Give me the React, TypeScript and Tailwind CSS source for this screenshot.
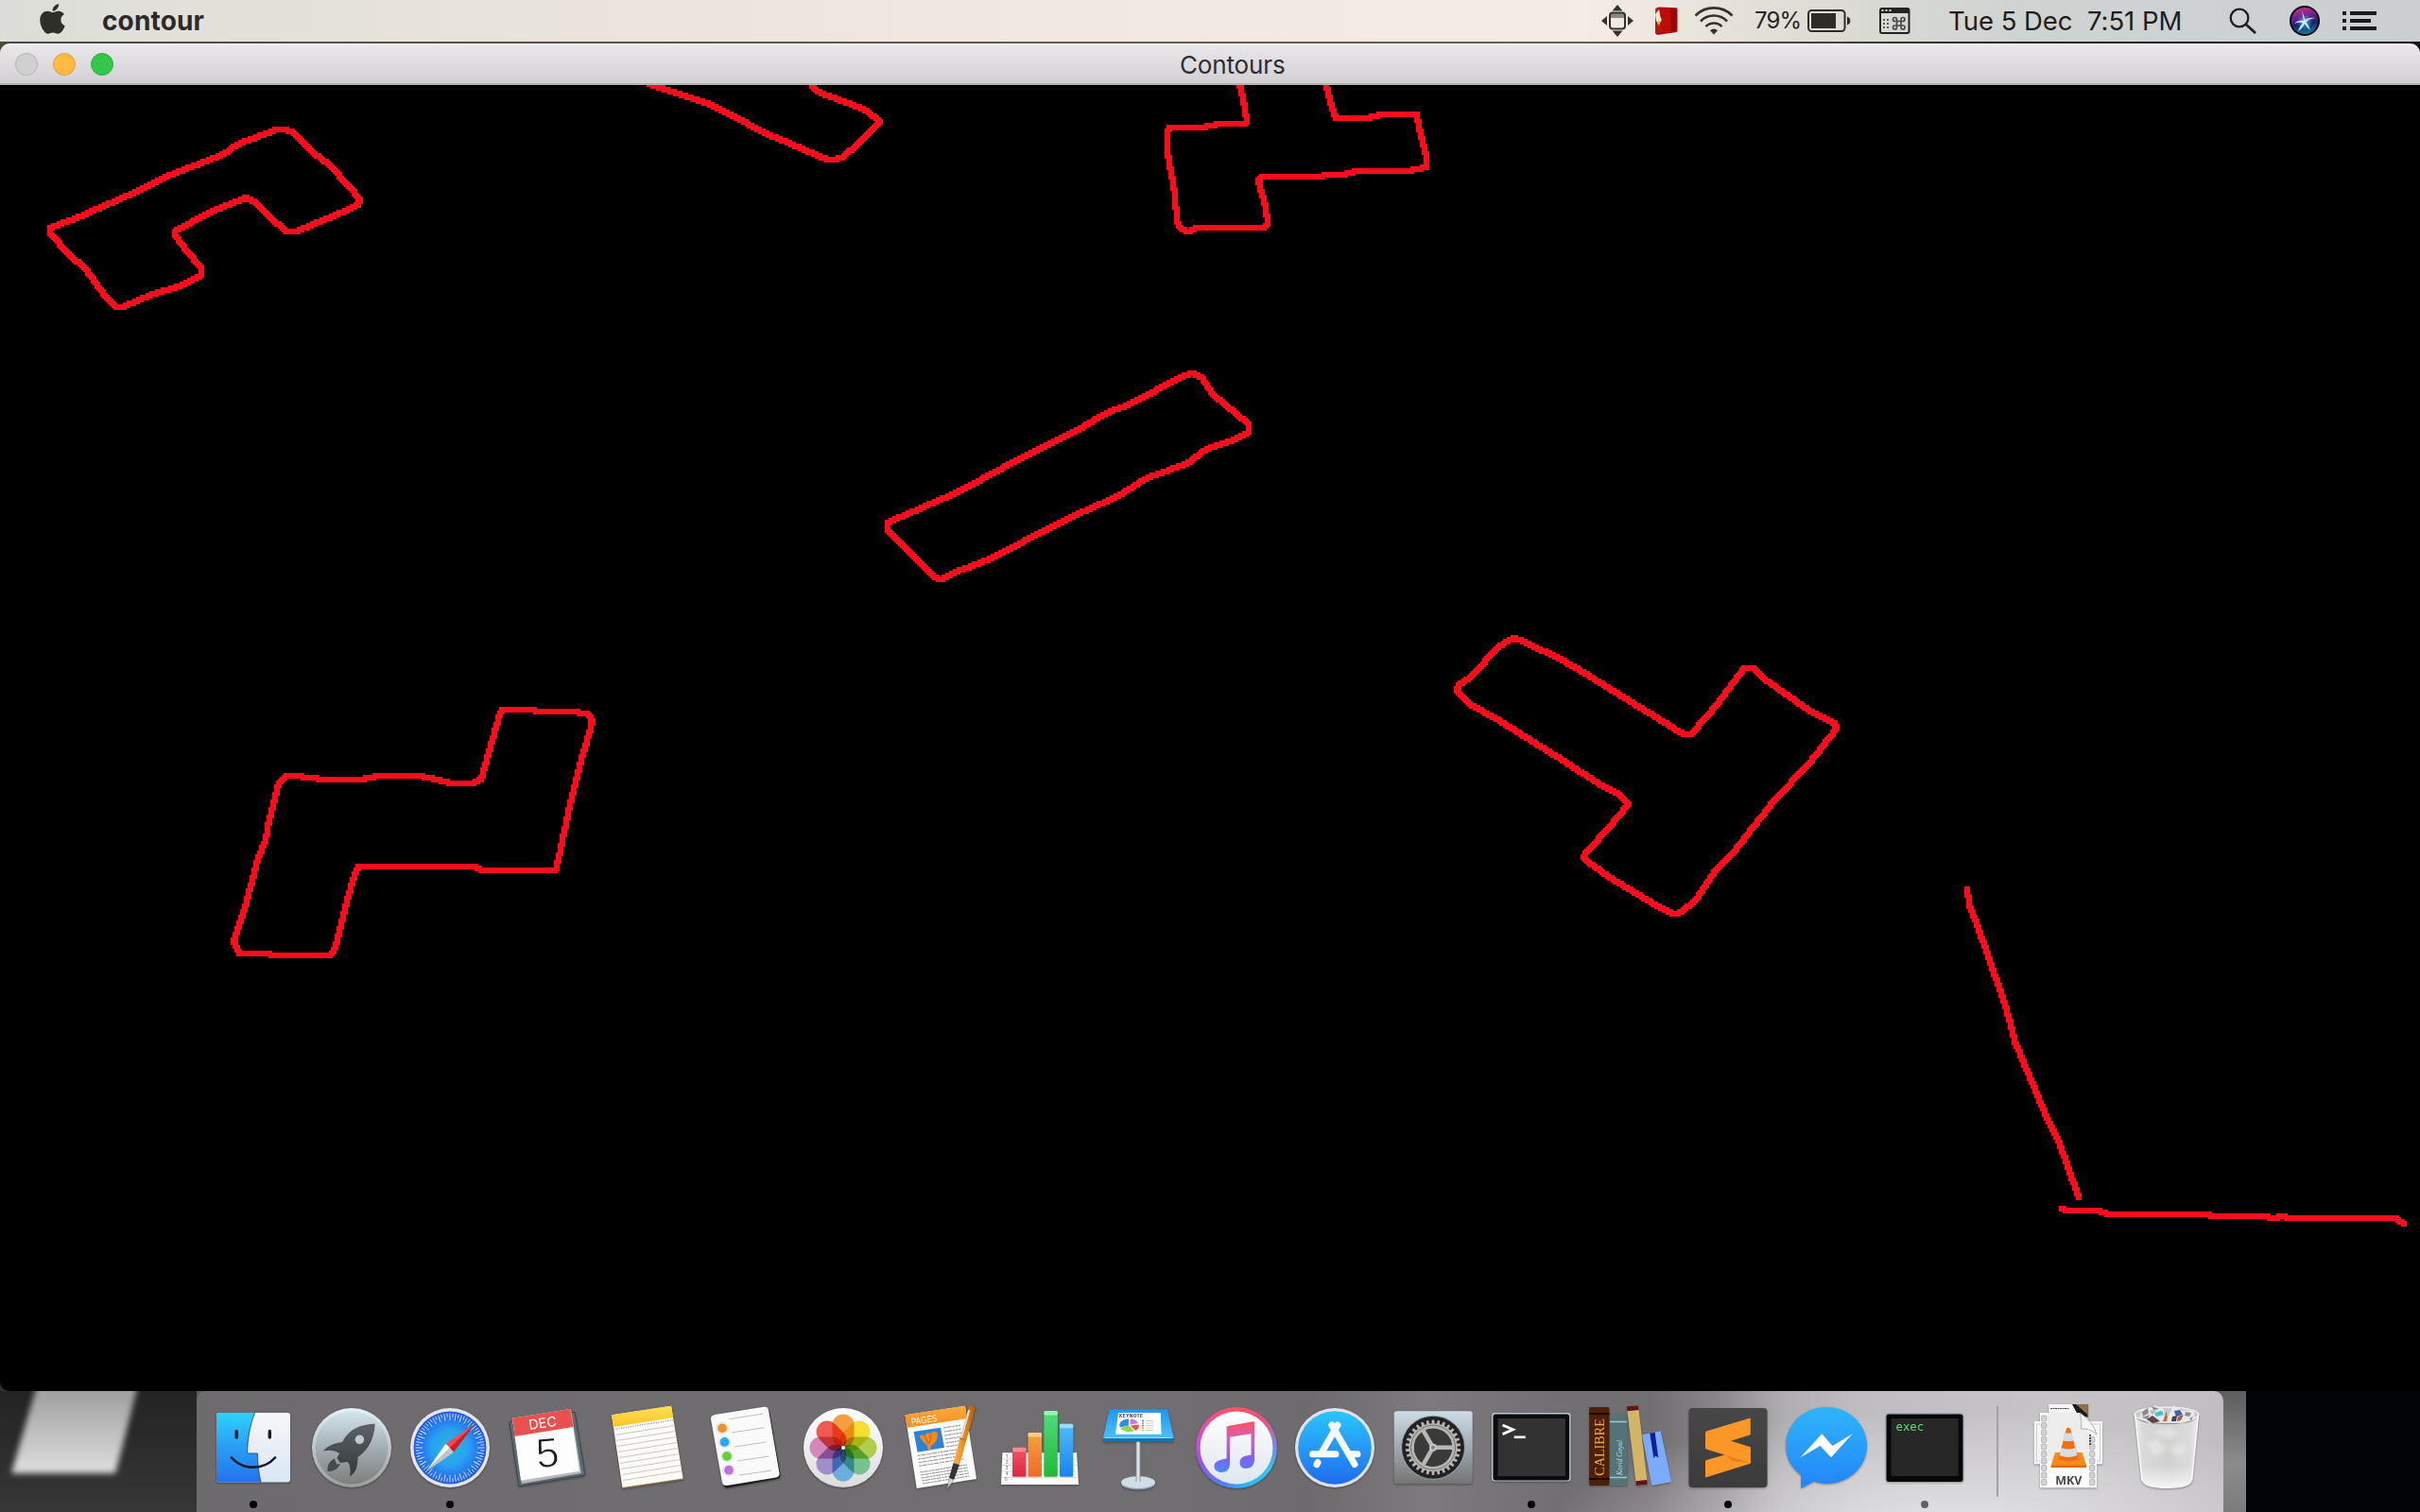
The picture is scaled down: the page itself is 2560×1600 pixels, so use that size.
import type { ReactNode } from "react";
import { FaApple } from "react-icons/fa";

const RED = "#fc0d1b";

const contours: { closed: boolean; points: string }[] = [
  {
    closed: true,
    points:
      "300,136 308,138 333,162 347,173 369,197 381.5,211 379,216 347,231 312,245 302,245 284,228 269,212 261,209 220,225 184,244 184,249 196,265 212,282 212,290 188,302 163,310 129,325 122,325 110,313 100,298 90,285 71,267 52,247 53,240 84,228 135,206 171,188 237,163 251,153 292,137",
  },
  {
    closed: false,
    points:
      "680,84 692,90 746,109 781,124 804,138 829,149 870,167 879,169.5 890,166.5 910,148 930,129.5 926,124 913,115.5 864,96 858,90 856,84",
  },
  {
    closed: false,
    points:
      "1310,80 1311,89 1314.5,104 1318.5,126.5 1317,131 1291.5,131 1271.5,134 1237,135.5 1234.7,139.5 1235.3,160 1242.8,204 1245.6,234 1248.5,241 1256,245 1266,241 1337.5,241 1341,236 1338.6,219 1331.7,191 1334.6,187 1377.7,187 1420.7,184 1435,181 1489.6,181 1508.5,177 1508.5,167 1501,134 1498.8,121 1461,120.7 1446.5,125 1412.7,125 1406.4,106 1402,89 1400,82",
  },
  {
    closed: true,
    points:
      "1261.7,395 1270,399.6 1283,417 1320,448.5 1320,456.6 1306,465 1277,475 1254,490 1214,504 1179.6,526 1133.7,546.5 1082,572.4 1042,592.7 1007.4,607.5 994,612 987,608 964,587 939.7,560 939.7,552.8 1013,520.6 1087.8,480 1133.7,459.6 1171,437 1196.8,427 1248.5,398.5",
  },
  {
    closed: true,
    points:
      "530,751 563,751 570,753 602,753 621.7,754.5 626,762 613,810 605,843 588,917 587,921 510,921 502,917 379,917 375,927 367,953 354,1002 348,1010.7 288,1010.7 283,1008.7 252,1008.7 247,997 258,960 272,908 280,888 285,867 295,828 303,821 313,821 343,824.7 380,824.7 400,821 442,821 462,824 478,829 498,829 508,824 528,755",
  },
  {
    closed: true,
    points:
      "1601.7,675.7 1608,676.7 1618,682.7 1643,693 1670,708 1780,776 1788,776.7 1816.7,745 1845,707.7 1855,707.7 1866.7,719 1913,750 1941.7,765 1942.7,770.7 1913,808 1876.7,846.7 1833,903 1815,921.7 1795,950 1778,965.7 1770,966.7 1756.7,961.7 1706.7,931.7 1680,913 1675.7,906.7 1678,900 1700,876.7 1723,850 1710,839 1696.7,833 1650,803 1586.7,763 1555,744 1541.7,731.7 1542,725.7 1555,716 1585,685 1596.7,676",
  },
  {
    closed: false,
    points:
      "2081,941.7 2083,956.7 2091.7,976.7 2105,1016.7 2118,1056.7 2126.7,1083 2130,1100 2140,1125 2163,1176.7 2178,1210 2198,1266.7",
  },
  {
    closed: false,
    points:
      "2180,1279 2188,1281 2218,1281 2231.7,1284.7 2281.7,1285 2396.7,1287 2403,1289 2415,1287 2421.7,1289 2535,1289 2542,1295.7",
  },
];

/* The canvas is drawn at half resolution: each line is stepped cell by cell with a 3 × 3 brush. */
const CELL = 2;

function rasterise(points: string, closed: boolean): string {
  const cells = points.split(" ").map((p) => p.split(",").map((n) => Math.floor(Number(n) / CELL)));
  if (closed) cells.push(cells[0]);
  const parts: string[] = [];
  for (let i = 0; i < cells.length - 1; i++) {
    const [x0, y0] = cells[i];
    const [x1, y1] = cells[i + 1];
    const steps = Math.max(Math.abs(x1 - x0), Math.abs(y1 - y0), 1);
    for (let s = 0; s <= steps; s++) {
      const x = Math.round(x0 + ((x1 - x0) * s) / steps);
      const y = Math.round(y0 + ((y1 - y0) * s) / steps);
      parts.push(`M${(x - 1) * CELL} ${(y - 1) * CELL}h6v6h-6z`);
    }
  }
  return parts.join("");
}

function ContourCanvas() {
  return (
    <svg viewBox="0 90 2560 1382" className="block h-[1382px] w-[2560px]" shapeRendering="crispEdges">
      {contours.map((c, i) => (
        <path key={i} d={rasterise(c.points, c.closed)} fill={RED} />
      ))}
    </svg>
  );
}

/* ---------- menu bar ---------- */

function DisplayIcon() {
  return (
    <svg viewBox="0 0 34 34" className="h-[34px] w-[34px]">
      <path d="M17 0l5.500 6.500h-11zM17 34l5.500-6.500h-11zM0 17l6-5v10zM34 17l-6-5v10z" fill="#34322e" />
      <path d="M9 9h16v5H9z" fill="#8b8783" />
      <rect x="9" y="8.500" width="16" height="17" rx="3" fill="none" stroke="#34322e" strokeWidth="2" />
    </svg>
  );
}

function RedBookIcon() {
  return (
    <svg viewBox="0 0 25 30" className="h-[30px] w-[25px]">
      <path d="M1.500 2l3-1.500 19 .7 1 .8v24l-1 1L3 30l-2-2z" fill="#a60a0a" />
      <path d="M6 2h17v25H8z" fill="#bd0c0c" />
      <path d="M17 2h6v25h-5z" fill="#a00505" />
      <path d="M1.500 2l4.500 0 2 25-4 2-3-1z" fill="#c01010" />
      <path d="M1 8l4-5 1.500 8 1.500 3-2 3-1 3-3-5z" fill="#f1e6d2" />
      <path d="M3.500 15l3 1-2.500 4z" fill="#cfae2e" />
    </svg>
  );
}

function WifiIcon() {
  return (
    <svg viewBox="0 0 42 30" className="h-[30px] w-[42px]">
      <g fill="none" stroke="#34322e" strokeWidth="2.600">
        <path d="M1.500 9.500a27.500 27.500 0 0 1 39 0" />
        <path d="M7 15.500a19.500 19.500 0 0 1 28 0" />
        <path d="M12.500 21a12 12 0 0 1 17 0" />
      </g>
      <path d="M21 29.500l-4-4.200a5.600 5.600 0 0 1 8 0z" fill="#34322e" />
    </svg>
  );
}

function BatteryIcon() {
  return (
    <svg viewBox="0 0 46 24" className="h-[24px] w-[46px]">
      <rect x="1" y="1" width="38.500" height="22" rx="3.500" fill="none" stroke="#2e2c28" strokeWidth="2" />
      <rect x="4" y="4" width="26" height="16" fill="#2e2c28" />
      <path d="M42 7.500c4.500 1.500 4.500 7.500 0 9z" fill="#2e2c28" />
    </svg>
  );
}

function ShortcutIcon() {
  return (
    <svg viewBox="0 0 33 28" className="h-[28px] w-[33px]">
      <rect x="1" y="1" width="30.500" height="26" rx="2" fill="none" stroke="#24231f" strokeWidth="2" />
      <path d="M1 1h30v5H1z" fill="#24231f" />
      <g fill="#d9dad5">
        <rect x="2.500" y="2" width="2" height="2" />
        <rect x="6.500" y="2" width="2" height="2" />
        <rect x="10.500" y="2" width="2" height="2" />
      </g>
      <g fill="#5b5a56">
        <rect x="4" y="12" width="2" height="2" />
        <rect x="8" y="12" width="2" height="2" />
        <rect x="4" y="16" width="2" height="2" />
        <rect x="8" y="16" width="2" height="2" />
        <rect x="4" y="20" width="2" height="2" />
        <rect x="8" y="20" width="2" height="2" />
      </g>
      <path
        d="M18.500 14.500h4.500v4.500h-4.500zM18.500 14.500h-2a2 2 0 1 1 2-2zM23 14.500h2a2 2 0 1 0-2-2zM18.500 19h-2a2 2 0 1 0 2 2zM23 19h2a2 2 0 1 1-2 2z"
        fill="none"
        stroke="#4a4945"
        strokeWidth="1.700"
      />
    </svg>
  );
}

function SearchIcon() {
  return (
    <svg viewBox="0 0 30 28" className="h-[28px] w-[30px]">
      <circle cx="11" cy="11" r="9.300" fill="none" stroke="#1d1f1f" strokeWidth="2.300" />
      <path d="M17.500 17.500l10.500 9.500" stroke="#1d1f1f" strokeWidth="2.800" />
    </svg>
  );
}

function SiriIcon() {
  return (
    <svg viewBox="0 0 32 32" className="h-8 w-8">
      <defs>
        <linearGradient id="siri" x1="0.300" y1="0" x2="0.500" y2="1">
          <stop offset="0" stopColor="#c9307f" />
          <stop offset=".35" stopColor="#6a2390" />
          <stop offset=".65" stopColor="#16246f" />
          <stop offset="1" stopColor="#0e7f98" />
        </linearGradient>
        <radialGradient id="siriGlow">
          <stop offset="0" stopColor="#fff" stopOpacity=".9" />
          <stop offset=".35" stopColor="#7be0f0" stopOpacity=".5" />
          <stop offset="1" stopColor="#2b7be0" stopOpacity="0" />
        </radialGradient>
      </defs>
      <circle cx="16" cy="16" r="16" fill="#0a0a14" />
      <circle cx="16" cy="16" r="14" fill="url(#siri)" />
      <circle cx="16" cy="17" r="9" fill="url(#siriGlow)" />
      <path
        d="M13 6q3 5 3 9 5-3 11-2-6 1-10 4 4 4 5 9-4-3-6-7-2 5-7 8 2-6 5-9-5-1-9 1 4-4 10-3-1-5-2-10z"
        fill="#d9f6fa"
        opacity=".85"
      />
    </svg>
  );
}

function ListIcon() {
  return (
    <svg viewBox="0 0 36 20" className="h-[20px] w-[36px]">
      <g fill="#1a1c1c">
        <rect x="0" y="0" width="4" height="4" />
        <rect x="8" y="0" width="28" height="4" />
        <rect x="0" y="8" width="4" height="4" />
        <rect x="8" y="8" width="22" height="4" />
        <rect x="0" y="16" width="4" height="4" />
        <rect x="8" y="16" width="28" height="4" />
      </g>
    </svg>
  );
}

function MenuBar() {
  return (
    <header className="flex h-[44px] w-full items-center bg-[linear-gradient(90deg,#dcddd8_0px,#e3e1da_260px,#ebe4de_640px,#f1e9e1_1150px,#f4ece5_1680px,#dfddd5_1900px,#cfd3d2_2140px,#cbcfd0_2560px)] font-[Inter,sans-serif] text-[#262521]">
      <FaApple className="ml-[42px] h-[36px] w-[27px] -translate-y-[2px] text-[#302e29]" />
      <span className="ml-[39px] w-[120px] text-[28px] font-bold leading-[44px] tracking-[0.15px] whitespace-nowrap text-[#2c2a26]">
        contour
      </span>
      <div className="ml-[1466px] flex h-full items-center">
        <DisplayIcon />
        <div className="ml-[22px]"><RedBookIcon /></div>
        <div className="ml-[17px]"><WifiIcon /></div>
        <span className="ml-[22px] w-[56px] text-[24px] leading-[44px] tracking-[-0.900px] whitespace-nowrap">79%</span>
        <BatteryIcon />
        <div className="ml-[30px]"><ShortcutIcon /></div>
        <span className="ml-[40px] w-[257px] text-[27.500px] leading-[44px] tracking-[-0.030px] whitespace-pre text-[#1d1e1c]">
          {"Tue 5 Dec  7:51 PM"}
        </span>
        <div className="ml-[40px]"><SearchIcon /></div>
        <div className="ml-[34px]"><SiriIcon /></div>
        <div className="ml-[24px]"><ListIcon /></div>
      </div>
    </header>
  );
}

/* ---------- dock icons, each on a 104 × 104 field ---------- */

function Icon({ children }: { children: ReactNode }) {
  return (
    <svg viewBox="0 0 104 104" className="h-[104px] w-[104px] overflow-visible drop-shadow-[0_1px_1px_rgba(0,0,0,0.35)]">
      {children}
    </svg>
  );
}

function Grad({ id, stops, x2 = "0", y2 = "1" }: { id: string; stops: [number, string][]; x2?: string; y2?: string }) {
  return (
    <linearGradient id={id} x1="0" y1="0" x2={x2} y2={y2}>
      {stops.map(([o, c]) => (
        <stop key={o} offset={o} stopColor={c} />
      ))}
    </linearGradient>
  );
}

function Finder() {
  return (
    <Icon>
      <defs>
        <Grad id="fL" stops={[[0, "#2cd2fa"], [0.5, "#2a9df5"], [1, "#2472ee"]]} />
        <Grad id="fR" stops={[[0, "#f7f7f8"], [1, "#d9e6f4"]]} />
      </defs>
      <rect x="13" y="15" width="78" height="73.500" rx="3" fill="url(#fR)" />
      <path d="M16 15H53.500C48 29 46 43 45.600 57Q45.600 58 46.600 58H56.500C56.500 68 57.500 79 60 88.500H16a3 3 0 0 1-3-3V18a3 3 0 0 1 3-3z" fill="url(#fL)" />
      <path d="M53.500 15C48 29 46 43 45.600 57Q45.600 58 46.600 58H56.500C56.500 68 57.500 79 60 88.500" fill="none" stroke="#1c3c66" strokeWidth=".8" />
      <path d="M34.200 34.500v6.500M69.300 34.500v6.500" stroke="#151b26" strokeWidth="3.400" strokeLinecap="round" />
      <path d="M29 62.500C41 76 63 76 75 62.500" fill="none" stroke="#151b26" strokeWidth="2.600" strokeLinecap="round" />
    </Icon>
  );
}

function Launchpad() {
  return (
    <Icon>
      <defs>
        <Grad id="lp" stops={[[0, "#d3e5ec"], [0.5, "#a3afb3"], [1, "#7e7d7c"]]} />
        <Grad id="lpr" stops={[[0, "#e4f2f6"], [1, "#9a9c9c"]]} />
        <Grad id="rk" stops={[[0, "#5c6265"], [1, "#33383b"]]} />
      </defs>
      <circle cx="52" cy="52" r="42" fill="url(#lpr)" />
      <circle cx="52" cy="52" r="38.500" fill="url(#lp)" />
      <path d="M76.700 26.700C62 27 49 32 42 46C35 47 27 49 22 55.500C28 54 34 54.500 39 58L36.500 63L40 68L48 67C51 72 51 77 50 82C56 79 58.500 73 58.500 62C70 54 76 42 76.700 26.700z" fill="url(#rk)" />
      <path d="M34 63.500C27 67 26.500 71 26.500 77C32 77 37 75.500 40 69L36 69.500z" fill="#454b4e" />
      <circle cx="60.400" cy="43.300" r="4.800" fill="#bcc9ce" />
    </Icon>
  );
}

function Safari() {
  return (
    <Icon>
      <defs>
        <radialGradient id="sf">
          <stop offset="0" stopColor="#27b9e0" />
          <stop offset=".5" stopColor="#2aa0f0" />
          <stop offset="1" stopColor="#2058ee" />
        </radialGradient>
      </defs>
      <circle cx="52" cy="52" r="42" fill="#e6e6ea" />
      <circle cx="52" cy="52" r="38.500" fill="url(#sf)" />
      {Array.from({ length: 72 }, (_, i) => (
        <path key={i} d={i % 2 ? "M52 15.500v4" : "M52 15.500v7.500"} stroke="#fff" strokeWidth=".9" opacity=".85" transform={`rotate(${i * 5} 52 52)`} />
      ))}
      <path d="M78 27L47.400 47.700L51.700 52z" fill="#fb4a4d" />
      <path d="M78 27L56 56.700L51.700 52z" fill="#d01c24" />
      <path d="M27 77L47.400 47.700L51.700 52z" fill="#fafafa" />
      <path d="M27 77L56 56.700L51.700 52z" fill="#c4c4c6" />
    </Icon>
  );
}

function Calendar() {
  return (
    <Icon>
      <path d="M11 25L80 14L91 81L21 92.700z" fill="#5d6b72" stroke="#3c474d" strokeWidth="1" />
      <path d="M14 22L76 12L87 79L24 90z" fill="#b9b9b6" />
      <path d="M14 20.700L75.300 11L85 76.700L23 86.700z" fill="#fdfdfd" />
      <path d="M14 20.700L75.300 11L78.500 30L16.500 40z" fill="#e8514f" />
      <text x="46" y="31" transform="rotate(-8 46 26)" textAnchor="middle" fontFamily="Inter" fontSize="14.500" fill="#fff">DEC</text>
      <text x="51" y="72.500" transform="rotate(-5 52 57)" textAnchor="middle" fontFamily="Liberation Sans" fontSize="44" fill="#1c1c1c" stroke="#fdfdfd" strokeWidth=".9">5</text>
    </Icon>
  );
}

function Notes() {
  return (
    <Icon>
      <defs>
        <Grad id="nt" stops={[[0, "#fddf52"], [1, "#f9c627"]]} />
      </defs>
      <path d="M15 18.500L78.500 9L91 85.500L27 95.200z" fill="#8d7a3a" />
      <path d="M15 17.300L78 7.700L90.500 84.500L26.400 94z" fill="#fcfbf7" />
      <path d="M15 17.300L78 7.700L80 20L17 30z" fill="url(#nt)" />
      <path d="M17.500 32.500L80.500 22.500" stroke="#777" strokeWidth="1" strokeDasharray="1 1.500" />
      {Array.from({ length: 9 }, (_, i) => (
        <path key={i} d={`M${19 + i} ${38.5 + i * 6}L${81.500 + i} ${28.500 + i * 6}`} stroke="#c9c7c1" strokeWidth="1" />
      ))}
    </Icon>
  );
}

function Reminders() {
  const rows: [number, number, string][] = [
    [28, 31.3, "#fb8f26"],
    [30.5, 46, "#2aa9f4"],
    [33, 61, "#5fd13b"],
    [35, 75.7, "#c06fe0"],
  ];
  return (
    <Icon>
      <path d="M20 19L73 11Q77 10 78 14L89.500 80Q90 84 86 85L34 94.500Q30 95 29 91L16.500 23Q16 20 20 19z" fill="#1d1e20" />
      <path d="M20 17L72 8.800Q76 8 77 12L88.500 79Q89 82.500 85 83.500L33 92Q29 92.500 28 89L16 22Q15.700 18 20 17z" fill="#fafafa" />
      <path d="M35.500 21.700L71.300 16M38 36L72.600 30.700M40.700 51L74.600 46M43.600 66L77.500 61M46 81L80.300 76" stroke="#b9b9b9" strokeWidth=".9" />
      {rows.map(([x, y, c]) => (
        <g key={c}>
          <circle cx={x} cy={y} r="6" fill="#fff" stroke="#d5d5d5" strokeWidth=".8" />
          <circle cx={x} cy={y} r="4.900" fill={c} />
        </g>
      ))}
    </Icon>
  );
}

function Photos() {
  const petals = ["#f6962f", "#f5dd22", "#a9cc3e", "#6cc08a", "#63a9e0", "#9a86c6", "#cf7fb4", "#ee4e40"];
  return (
    <Icon>
      <defs>
        <Grad id="ph" stops={[[0, "#ffffff"], [1, "#dcdcdc"]]} />
      </defs>
      <circle cx="52" cy="52" r="42" fill="url(#ph)" />
      <g className="isolate">
        {petals.map((c, i) => (
          <rect key={c} x="40.500" y="16.500" width="23" height="35.500" rx="11.500" fill={c} opacity=".92" className="mix-blend-multiply" transform={`rotate(${i * 45} 52 52)`} />
        ))}
      </g>
      <circle cx="52" cy="52" r="2" fill="#fff" />
    </Icon>
  );
}

function Pages() {
  return (
    <Icon>
      <defs>
        <Grad id="pg" stops={[[0, "#fdab3d"], [1, "#f58b20"]]} />
        <Grad id="pn" x2="1" y2="0" stops={[[0, "#f7b24a"], [0.5, "#ef8a18"], [1, "#a85c0c"]]} />
      </defs>
      <path d="M13.500 17.300L76.800 7.700L89 85L25.800 95z" fill="#fdfdfd" />
      <path d="M13.500 17.300L76.800 7.700L79 21L15.600 30.700z" fill="url(#pg)" />
      <text x="33.500" y="26" transform="rotate(-8.500 33.500 22)" textAnchor="middle" fontFamily="Liberation Sans" fontSize="10" fill="#fff" textLength="27.500" lengthAdjust="spacingAndGlyphs">PAGES</text>
      <path d="M22.500 35L51 30.700L55 51.700L26.600 56.700z" fill="#2b83d8" />
      <path d="M38 55L36.500 49Q31 46 28.500 39Q32 38 34 39Q37 35 40 37Q44 33 47.500 36Q49 43 44 48L40.500 50L40.500 54.500z" fill="#f28a1d" />
      <path d="M34 39Q36 44 38 48M41 38Q40 43 39 48" stroke="#c95f0c" strokeWidth="1" fill="none" />
      <g stroke="#8d8d8d" strokeWidth="1" strokeDasharray="3 .7 5 .8 2 .6">
        {Array.from({ length: 6 }, (_, i) => (
          <path key={i} d={`M${54 + i * 0.6} ${31 + i * 4}L${72 + i * 0.6} ${28.200 + i * 4}`} />
        ))}
        {Array.from({ length: 4 }, (_, i) => (
          <path key={i} d={`M${26.500 + i * 0.6} ${60.500 + i * 3.600}L${74 + i * 0.6} ${53 + i * 3.600}`} />
        ))}
        {Array.from({ length: 5 }, (_, i) => (
          <path key={i} d={`M${29.500 + i * 0.6} ${78 + i * 3}L${79 + i * 0.6} ${70 + i * 3}`} />
        ))}
      </g>
      <path d="M81 8.500Q84.500 6.500 88 9.500L71 70L64.500 68z" fill="url(#pn)" />
      <path d="M81 13L73 41" stroke="#d8dde0" strokeWidth="2.200" strokeLinecap="round" />
      <path d="M71 42L77.500 43.500" stroke="#c9700f" strokeWidth="1.500" />
      <path d="M64.500 68L71 70L65 86L60 84z" fill="#333" />
      <path d="M60 84L65 86L58.400 95z" fill="#cfd6da" stroke="#777" strokeWidth=".6" />
    </Icon>
  );
}

function Numbers() {
  const bars: [number, number, string, string, string][] = [
    [23, 51.7, "#f4566a", "#dd2840", "#fb8a90"],
    [39.5, 36, "#f7a23c", "#ef6a25", "#fbca80"],
    [56.3, 13, "#53dc7e", "#1fba34", "#97f5ae"],
    [72.800, 26.7, "#50bdf8", "#1a82f0", "#9adcfc"],
  ];
  return (
    <Icon>
      <defs>
        {bars.map((b, i) => (
          <Grad key={i} id={`nb${i}`} stops={[[0, b[2]], [1, b[3]]]} />
        ))}
      </defs>
      <path d="M12.400 57.300H91L93 91H11z" fill="#fdfdfd" />
      <path d="M22 57V86M12 64h79M12 70.500h79M12 77h79M11.500 83.500h81" stroke="#d2d2d2" strokeWidth=".8" />
      <g fontFamily="Inter" fontSize="4.500" fill="#555">
        <text x="16" y="62.500">1</text>
        <text x="16" y="68.500">2</text>
        <text x="15.500" y="74.500">3</text>
        <text x="15.500" y="80.500">4</text>
        <text x="15" y="86.500">5</text>
      </g>
      {bars.map((b, i) => (
        <g key={i}>
          <rect x={b[0]} y={b[1]} width="14.500" height={82.700 - b[1]} rx="1.500" fill={`url(#nb${i})`} />
          <rect x={b[0]} y={b[1]} width="14.500" height="4.500" rx="1.500" fill={b[4]} />
        </g>
      ))}
    </Icon>
  );
}

function Keynote() {
  return (
    <Icon>
      <defs>
        <Grad id="kn" stops={[[0, "#1d96f4"], [1, "#4cc0fa"]]} />
        <Grad id="kp" x2="1" y2="0" stops={[[0, "#8d979e"], [0.5, "#eef3f6"], [1, "#8d979e"]]} />
      </defs>
      <ellipse cx="52" cy="90" rx="18" ry="6.500" fill="#8d9ba6" />
      <ellipse cx="52" cy="88.500" rx="18" ry="6.500" fill="#cfdde8" />
      <rect x="49.500" y="45" width="5" height="43" fill="url(#kp)" />
      <path d="M21.500 11.300H83L89.600 42H15z" fill="url(#kn)" />
      <path d="M15 42H89.600V45.700H15z" fill="#1673b8" />
      <path d="M17 41.500H88" stroke="#9be0ff" strokeWidth="1" />
      <path d="M31 15H75.800L76.600 37.700H28z" fill="#fff" />
      <text x="32" y="20" fontFamily="Inter" fontWeight="700" fontSize="4.800" fill="#333" textLength="25">KEYNOTE</text>
      <path d="M42 28.500V21.500A9.500 6.500 0 0 0 33 30.500z" fill="#2a8fe8" />
      <path d="M42 28.500L33.500 31A9.500 6.500 0 0 0 48 34z" fill="#8bd94a" />
      <path d="M43.500 28.500L49.500 34A9.500 6.500 0 0 0 52.500 27.500z" fill="#f05252" />
      <path d="M43.500 27.500V21.500A9.500 6.500 0 0 1 52 26z" fill="#c774dc" />
      <g strokeWidth="1.400">
        <path d="M56 23.500h2" stroke="#2a8fe8" />
        <path d="M56 26h2" stroke="#c774dc" />
        <path d="M56 28.500h2" stroke="#f05252" />
        <path d="M56 31h2" stroke="#fb9d33" />
        <path d="M56 33.500h2" stroke="#8bd94a" />
      </g>
      <path d="M60 23.500h8M60 26h8M60 28.500h8M60 31h8M60 33.500h8" stroke="#c4c4c4" strokeWidth=".9" />
    </Icon>
  );
}

function ITunes() {
  return (
    <Icon>
      <defs>
        <Grad id="itn" stops={[[0, "#fb5560"], [0.4, "#c963c8"], [0.750, "#7b62f4"], [1, "#4a8cf8"]]} />
        <Grad id="itf" stops={[[0, "#ffffff"], [1, "#dfe7ef"]]} />
      </defs>
      <foreignObject x="9" y="9" width="86" height="86">
        <div className="h-[86px] w-[86px] rounded-full bg-[conic-gradient(from_0deg,#fb5560,#ee4f86_12%,#6f8ce8_25%,#35c4f8_35%,#33b4f8_46%,#4c82f6_55%,#9355f0_68%,#d94cc8_80%,#fb4d7a_92%,#fb5560)]" />
      </foreignObject>
      <circle cx="52" cy="52" r="38.500" fill="url(#itf)" />
      <path d="M41.600 30.500Q41.600 29.300 43 29L69.800 24.300Q71 24.200 71 25.400V64.500C71 71 67 74 62 74C57.500 74 55.500 71 55.500 68C55.500 62 60 60.500 67.500 59.500V37.300L45 40.800V69C45 75 41 78 36.500 78C32 78 28.500 75.500 28.500 72C28.500 66.500 33 65 41.600 63.500z" fill="url(#itn)" />
    </Icon>
  );
}

function AppStore() {
  return (
    <Icon>
      <defs>
        <Grad id="as" stops={[[0, "#2bc6fb"], [1, "#1f6cee"]]} />
      </defs>
      <circle cx="52" cy="52" r="42" fill="#dfe2e8" />
      <circle cx="52" cy="52" r="38.800" fill="url(#as)" />
      <g stroke="#f7fafd" strokeWidth="7" strokeLinecap="round" fill="none">
        <path d="M55 28L38.500 56.500" />
        <path d="M48.800 28L73 69.500" />
        <path d="M28.500 58.700H53M68 58.700H76" />
        <path d="M34 67.500L32.800 69.700" />
      </g>
    </Icon>
  );
}

function Preferences() {
  return (
    <Icon>
      <defs>
        <Grad id="sp" stops={[[0, "#cddde4"], [0.5, "#a0a9ad"], [1, "#757473"]]} />
      </defs>
      <rect x="10.700" y="13.300" width="83" height="77" rx="3" fill="url(#sp)" />
      <circle cx="52" cy="51.700" r="34" fill="#8fa3b5" />
      <circle cx="52" cy="51.700" r="33" fill="#222223" />
      <g fill="#b4b3b0">
        {Array.from({ length: 30 }, (_, i) => (
          <path key={i} d="M50.200 28L50.800 22.500H53.200L53.800 28z" transform={`rotate(${i * 12} 52 51.700)`} />
        ))}
      </g>
      <circle cx="52" cy="51.700" r="22.800" fill="none" stroke="#b4b3b0" strokeWidth="5.500" />
      <circle cx="52" cy="51.700" r="20" fill="#3a3a3a" />
      <circle cx="52" cy="51.700" r="23.500" fill="none" stroke="#77767a" strokeWidth="1" />
      <g stroke="#b9b8b5" strokeWidth="4.500">
        <path d="M52 51.700H73" />
        <path d="M52 51.700H73" transform="rotate(120 52 51.700)" />
        <path d="M52 51.700H73" transform="rotate(240 52 51.700)" />
      </g>
      <circle cx="52" cy="51.700" r="4" fill="#c6c6c4" />
      <circle cx="52" cy="51.700" r="2" fill="#7b8288" />
    </Icon>
  );
}

function Terminal() {
  return (
    <Icon>
      <rect x="10" y="15" width="83.600" height="72.500" rx="3" fill="#b9c6ca" />
      <rect x="11.500" y="16.500" width="80.600" height="70" rx="2.500" fill="#0b0b0b" />
      <rect x="16.500" y="21" width="71.500" height="61" fill="#323232" />
      <path d="M21.500 28L32.500 32.800L21.500 37.600" fill="none" stroke="#fff" strokeWidth="2.800" />
      <rect x="33.700" y="39.500" width="12" height="2.600" fill="#fff" />
    </Icon>
  );
}

function Calibre() {
  return (
    <Icon>
      <rect x="9.200" y="9" width="21.200" height="83" rx="1.500" fill="#4f2008" />
      <path d="M9.200 16h21.200M9.200 85h21.200" stroke="#1c0a02" strokeWidth="2" />
      <text transform="translate(25.300 81.700) rotate(-90)" fontFamily="Liberation Serif" fontSize="15.500" fill="#eda73a" textLength="60.500" lengthAdjust="spacingAndGlyphs">CALIBRE</text>
      <rect x="30.900" y="17" width="18.300" height="75" rx="1" fill="#527479" />
      <path d="M31 24.500h18M31 83.500h18" stroke="#a9c3c7" strokeWidth="1.300" />
      <text transform="translate(43.500 81) rotate(-90)" fontFamily="Liberation Serif" fontStyle="italic" fontSize="9" fill="#c9dcdf" textLength="37" lengthAdjust="spacingAndGlyphs">Kovid Goyal</text>
      <path d="M48.800 8.300L61 7.300L70.900 90.700L59 92z" fill="#d2b566" />
      <path d="M48.800 8.300L61 7.300L61.600 12L49.400 13.200zM58.400 87.300L70.300 86L70.900 90.700L59 92z" fill="#5f1420" />
      <path d="M65 38.300L84.700 34.300L96.200 88.300L75.300 92z" fill="#7dabfb" />
      <path d="M73.300 36.700L78.600 35.700L82.300 62.700L79.500 60.500L77.400 63z" fill="#0c1f9f" />
    </Icon>
  );
}

function Sublime() {
  return (
    <Icon>
      <defs>
        <Grad id="sb" stops={[[0, "#474747"], [1, "#3b3b3b"]]} />
      </defs>
      <rect x="10.500" y="10" width="83" height="84" rx="4" fill="url(#sb)" />
      <path d="M28 66.500Q28 65.500 29 65L49.500 59.300L75.800 68.300Q75.800 68.500 74.800 69L29 83.300Q28 83.500 28 82.500z" fill="#fb9726" />
      <path d="M49.500 59.500L75.800 51V68.300L56 66z" fill="#e5831b" />
      <path d="M28 36Q28 35 29 34.500L74.800 20.700Q75.800 20.500 75.800 21.500V37.500Q75.800 38.300 75 38.600L55 44.700L75 51Q75.800 51.300 75.800 52V68.300L29 53.500Q28 53 28 52z" fill="#fb9726" />
    </Icon>
  );
}

function Messenger() {
  return (
    <Icon>
      <defs>
        <Grad id="ms" stops={[[0, "#2eb5fb"], [1, "#2384f9"]]} />
      </defs>
      <path d="M52 9C28 9 9 27 9 50C9 63 15.500 74 25.300 81V95L39 87.500C43 89 47.500 90 52 90C76 90 95 72 95 50C95 27 76 9 52 9z" fill="url(#ms)" />
      <path d="M24.500 62.300L47.300 37.300L58.500 50L79.600 37.300L57 62.300L45.500 50z" fill="#fff" />
    </Icon>
  );
}

function Exec() {
  return (
    <Icon>
      <rect x="10.800" y="15.300" width="82.200" height="72.400" rx="3" fill="#9fb2b6" />
      <rect x="11.500" y="16.500" width="81" height="71.500" rx="2.500" fill="#070707" />
      <rect x="16.400" y="21" width="71.400" height="61" fill="#262626" />
      <text x="21.500" y="34.300" fontFamily="DejaVu Sans Mono" fontSize="12.300" fill="#4fe36e">exec</text>
    </Icon>
  );
}

function MkvFile() {
  return (
    <Icon>
      <rect x="15.800" y="24" width="72.400" height="45.300" fill="#f5f5f5" />
      <rect x="18.500" y="27" width="67" height="39" fill="none" stroke="#d0d0d0" />
      <rect x="31.300" y="6" width="41.300" height="20" fill="#f4f4f4" />
      <path d="M56 6H72.600V20L62 17z" fill="#1b1b1b" />
      <path d="M60 6H72.600V17z" fill="#8d7147" />
      <path d="M33 10.500h20" stroke="#555" strokeWidth="1" strokeDasharray="2 .5" />
      <path d="M22 15H64L82 38V94.300H22z" fill="#fdfdfd" />
      <path d="M30 15H64L74 38V66H30z" fill="#ededed" />
      {Array.from({ length: 10 }, (_, i) => (
        <g key={i} fill="#d3d3d3" stroke="#a5a5a5" strokeWidth=".7">
          <rect x="23.500" y={18 + i * 7.500} width="5.500" height="6" rx="1.200" />
          {i > 2 && <rect x="74.500" y={18 + i * 7.500} width="5.500" height="6" rx="1.200" />}
        </g>
      ))}
      <path d="M75 38v11" stroke="#222" strokeWidth="1.500" strokeDasharray="2 1" />
      <path d="M64 15Q67 24 65.500 32Q74 31 82 38Q78 24 64 15z" fill="#f6f6f6" stroke="#a9a9a9" strokeWidth=".9" />
      <path d="M38 57H66.500L71 70V73H33.800V70z" fill="#f88a1c" />
      <path d="M33.800 70.500H71V73H33.800z" fill="#e06c10" />
      <path d="M50 31.500Q52 30 54 31.500L62.500 64Q52 69 41.500 64z" fill="#ef6f14" />
      <path d="M48.500 36.500H55.500L57.500 44.500Q52 46 46.500 44.500z" fill="#d9dde2" />
      <path d="M44.600 52Q52 55 59.400 52L61.300 60Q52 64 42.700 60z" fill="#d9dde2" />
      <text x="52.300" y="91" textAnchor="middle" fontFamily="Open Sans" fontWeight="700" fontSize="12.500" fill="#484848" textLength="28">MKV</text>
    </Icon>
  );
}

function Trash() {
  return (
    <Icon>
      <defs>
        <Grad id="tr" x2="1" y2="0" stops={[[0, "#f2f2f2"], [0.15, "#dcdcdc"], [0.5, "#d6d5d4"], [0.85, "#dedede"], [1, "#f4f4f4"]]} />
        <Grad id="trb" stops={[[0, "#ffffff00"], [0.7, "#ffffff00"], [1, "#ffffffd0"]]} />
      </defs>
      <ellipse cx="52" cy="17" rx="34" ry="8" fill="#c9c9ca" stroke="#efefef" strokeWidth="1.500" />
      <path d="M23 21L26 12L33 10L40 7L49 11L50 23L34 26z" fill="#e6e6e6" />
      <path d="M26 14l6-4 1 5-6 4zM36 8l8 3-6 1zM26 20l8-3-2 5z" fill="#8a8a8a" />
      <path d="M34 13l7-1-4 5z" fill="#b5b5b5" />
      <path d="M39 15l8-2 2 4-8 2z" fill="#3cc5d8" />
      <path d="M44 13l4 1-2 2z" fill="#67c95a" />
      <path d="M31 22l6-4 8 6-8 2z" fill="#5b4640" />
      <path d="M48 24l4-11 1 11z" fill="#c76a3d" />
      <path d="M52 23L59 7L68 13L80 12L82 22L68 26L54 25z" fill="#e9e9e9" />
      <path d="M60 13l6-1 3 5-7 2z" fill="#44609f" />
      <path d="M58 19l5-1-1 6-5 0z" fill="#3a3f5c" />
      <path d="M64 19l6-2-3 6-4 1z" fill="#a85d3c" />
      <path d="M72 14l6 1-2 4-5-1zM76 21l4-2-2 4z" fill="#8c8c8c" />
      <path d="M18 16Q20 24 30 25.500Q52 29 74 25.500Q84 24 86 16L78.500 87Q77 94.500 52 95Q28 94.500 26 87z" fill="url(#tr)" opacity=".95" />
      <path d="M18 16L26 87Q28 94.500 52 95Q77 94.500 78.500 87L86 16z" fill="url(#trb)" />
      <g className="blur-[2px]" fill="#ecebea" opacity=".6">
        <path d="M40 33l14-3 10 6-8 6-12-3zM30 48l12-5 10 10-14 8zM56 52l14-6 4 10-12 6z" />
      </g>
      <path d="M18.500 16L26 87M85.500 16L78.500 87" stroke="#fafafa" strokeWidth="1.500" />
    </Icon>
  );
}

const apps: { name: string; icon: ReactNode; dot?: string }[] = [
  { name: "Finder", icon: <Finder />, dot: "bg-black" },
  { name: "Launchpad", icon: <Launchpad /> },
  { name: "Safari", icon: <Safari />, dot: "bg-black" },
  { name: "Calendar", icon: <Calendar /> },
  { name: "Notes", icon: <Notes /> },
  { name: "Reminders", icon: <Reminders /> },
  { name: "Photos", icon: <Photos /> },
  { name: "Pages", icon: <Pages /> },
  { name: "Numbers", icon: <Numbers /> },
  { name: "Keynote", icon: <Keynote /> },
  { name: "iTunes", icon: <ITunes /> },
  { name: "App Store", icon: <AppStore /> },
  { name: "System Preferences", icon: <Preferences /> },
  { name: "Terminal", icon: <Terminal />, dot: "bg-black" },
  { name: "calibre", icon: <Calibre /> },
  { name: "Sublime Text", icon: <Sublime />, dot: "bg-black" },
  { name: "Messenger", icon: <Messenger /> },
  { name: "exec", icon: <Exec />, dot: "bg-[#626166]" },
];

function DockItem({ icon, dot }: { icon: ReactNode; dot?: string }) {
  return (
    <div className="flex w-[104px] flex-col items-center pt-2">
      {icon}
      {dot && <span className={`mt-1 size-2 rounded-full ${dot}`} />}
    </div>
  );
}

function Dock() {
  return (
    <nav className="flex h-[128px] w-[2144px] rounded-t-[10px] bg-[radial-gradient(ellipse_420px_130px_at_1850px_150px,rgba(232,231,234,0.9),rgba(232,231,234,0)),linear-gradient(90deg,#6d6b6d_0px,#706e70_1000px,#6d6b6e_1180px,#7c7a7c_1300px,#716f72_1440px,#716f72_1540px,#88868a_1610px,#b0aeb1_1680px,#bfbdc0_1760px,#c6c4c7_1950px,#c0bec1_2144px)] px-2">
      {apps.map((a) => (
        <DockItem key={a.name} icon={a.icon} dot={a.dot} />
      ))}
      <div className="mt-4 mr-[22px] ml-[24px] h-24 w-0.5 bg-[#a3a2a5]" />
      <DockItem icon={<MkvFile />} />
      <DockItem icon={<Trash />} />
    </nav>
  );
}

function TitleBar() {
  return (
    <div className="grid h-[44px] w-full grid-cols-[1fr_auto_1fr] items-center rounded-t-[10px] border-t-2 border-b-2 border-t-[#f4f3f5] border-b-[#b2b0b3] bg-linear-to-b from-[#e9e7ea] to-[#d2d0d3]">
      <div className="flex gap-4 pl-4">
        <span className="size-6 rounded-full border border-[#b3b2b4] bg-[#d0d0d0]" />
        <span className="size-6 rounded-full border border-[#dea03a] bg-[#fdbc40]" />
        <span className="size-6 rounded-full border border-[#2aae3e] bg-[#34c84a]" />
      </div>
      <span className="w-[112px] translate-x-6 translate-y-px text-[26px] leading-[40px] tracking-[-0.150px] whitespace-nowrap text-[#2f2d30] font-[Inter,sans-serif]">
        Contours
      </span>
      <span />
    </div>
  );
}

export default function App() {
  return (
    <main className="flex h-[1600px] w-[2560px] flex-col overflow-hidden bg-[#2b2b2b]">
      <MenuBar />
      <div className="h-0.5 w-full shrink-0 bg-[linear-gradient(90deg,#4a4a40,#5c5648_30%,#6b6050_65%,#20211f_85%,#050a0c)]" />
      <section className="flex w-full shrink-0 flex-col bg-[linear-gradient(90deg,#4a4a40,#101314)]">
        <TitleBar />
      </section>
      <div className="w-full shrink-0 bg-[#2e2e2e]">
        <div className="overflow-hidden rounded-bl-[10px] bg-black">
          <ContourCanvas />
        </div>
      </div>
      <div className="flex h-[128px] w-full shrink-0">
        <div className="h-full w-[208px] bg-linear-to-b from-[#232323] to-[#373737]">
          <svg viewBox="0 0 208 128" className="h-[128px] w-[208px]">
            <defs>
              <Grad id="paper" stops={[[0, "#9b9b9b"], [1, "#dedede"]]} />
            </defs>
            <path d="M39 -6L146 -6L122 87L12 87z" fill="url(#paper)" className="blur-[3px]" />
          </svg>
        </div>
        <div className="bg-[#5c5c5e]">
          <Dock />
        </div>
        <div className="w-[24px] bg-[linear-gradient(180deg,#5d5d5d,#8b8b8b_60%,#7c7c7c)]" />
        <div className="flex-1 bg-[#020505]" />
      </div>
    </main>
  );
}
